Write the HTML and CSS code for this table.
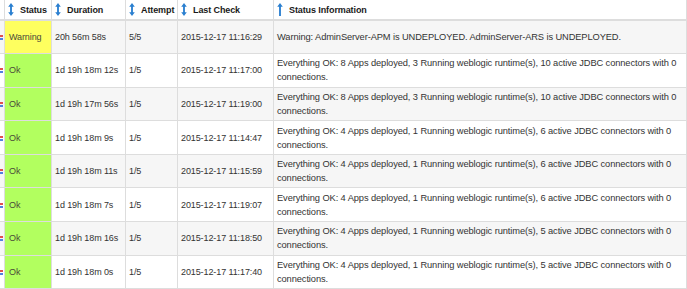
FILE: index.html
```html
<!DOCTYPE html>
<html>
<head>
<meta charset="utf-8">
<link rel="stylesheet" href="styles.css">
</head>
<body>
<table class="grid">
  <colgroup>
    <col class="c-lead"><col class="c-status"><col class="c-dur"><col class="c-att"><col class="c-last"><col class="c-info">
  </colgroup>
  <thead>
    <tr>
      <th class="lead"></th>
      <th><span class="hd"><svg class="sort" viewBox="0 0 6 14"><path d="M3 0 L6 4 H4 V10 H6 L3 14 L0 10 H2 V4 H0 Z"/></svg>Status</span></th>
      <th><span class="hd"><svg class="sort" viewBox="0 0 6 14"><path d="M3 0 L6 4 H4 V10 H6 L3 14 L0 10 H2 V4 H0 Z"/></svg>Duration</span></th>
      <th><span class="hd"><svg class="sort" viewBox="0 0 6 14"><path d="M3 0 L6 4 H4 V10 H6 L3 14 L0 10 H2 V4 H0 Z"/></svg>Attempt</span></th>
      <th><span class="hd"><svg class="sort" viewBox="0 0 6 14"><path d="M3 0 L6 4 H4 V10 H6 L3 14 L0 10 H2 V4 H0 Z"/></svg>Last Check</span></th>
      <th><span class="hd"><svg class="sort" viewBox="0 0 6 14"><path d="M3 0 L6 4 H4 V14 H2 V4 H0 Z"/></svg>Status Information</span></th>
    </tr>
  </thead>
  <tbody>
    <tr><td class="lead"><span class="mark"></span></td><td class="st warn">Warning</td><td>20h 56m 58s</td><td>5/5</td><td>2015-12-17 11:16:29</td><td class="info">Warning: AdminServer-APM is UNDEPLOYED. AdminServer-ARS is UNDEPLOYED.</td></tr>
    <tr><td class="lead"><span class="mark"></span></td><td class="st ok">Ok</td><td>1d 19h 18m 12s</td><td>1/5</td><td>2015-12-17 11:17:00</td><td class="info">Everything OK: 8 Apps deployed, 3 Running weblogic runtime(s), 10 active JDBC connectors with 0 connections.</td></tr>
    <tr><td class="lead"><span class="mark"></span></td><td class="st ok">Ok</td><td>1d 19h 17m 56s</td><td>1/5</td><td>2015-12-17 11:19:00</td><td class="info">Everything OK: 8 Apps deployed, 3 Running weblogic runtime(s), 10 active JDBC connectors with 0 connections.</td></tr>
    <tr><td class="lead"><span class="mark"></span></td><td class="st ok">Ok</td><td>1d 19h 18m 9s</td><td>1/5</td><td>2015-12-17 11:14:47</td><td class="info">Everything OK: 4 Apps deployed, 1 Running weblogic runtime(s), 6 active JDBC connectors with 0 connections.</td></tr>
    <tr><td class="lead"><span class="mark"></span></td><td class="st ok">Ok</td><td>1d 19h 18m 11s</td><td>1/5</td><td>2015-12-17 11:15:59</td><td class="info">Everything OK: 4 Apps deployed, 1 Running weblogic runtime(s), 6 active JDBC connectors with 0 connections.</td></tr>
    <tr><td class="lead"><span class="mark"></span></td><td class="st ok">Ok</td><td>1d 19h 18m 7s</td><td>1/5</td><td>2015-12-17 11:19:07</td><td class="info">Everything OK: 4 Apps deployed, 1 Running weblogic runtime(s), 6 active JDBC connectors with 0 connections.</td></tr>
    <tr><td class="lead"><span class="mark"></span></td><td class="st ok">Ok</td><td>1d 19h 18m 16s</td><td>1/5</td><td>2015-12-17 11:18:50</td><td class="info">Everything OK: 4 Apps deployed, 1 Running weblogic runtime(s), 5 active JDBC connectors with 0 connections.</td></tr>
    <tr><td class="lead"><span class="mark"></span></td><td class="st ok">Ok</td><td>1d 19h 18m 0s</td><td>1/5</td><td>2015-12-17 11:17:40</td><td class="info">Everything OK: 4 Apps deployed, 1 Running weblogic runtime(s), 5 active JDBC connectors with 0 connections.</td></tr>
  </tbody>
</table>
</body>
</html>
```

FILE: styles.css
```css
html, body {
  margin: 0;
  padding: 0;
  background: #ffffff;
}

.grid {
  border-collapse: collapse;
  table-layout: fixed;
  width: calc(100% + 17px);
  margin-left: -17px;
  font-family: "Liberation Sans", Arial, sans-serif;
  font-size: 9px;
  letter-spacing: -0.1px;
  line-height: 14px;
  color: #333333;
}

.c-lead { width: 21px; }
.c-status { width: 47px; }
.c-dur { width: 74px; }
.c-att { width: 52px; }
.c-last { width: 96px; }

.grid th {
  height: 19px;
  padding: 0 3px;
  text-align: left;
  font-weight: bold;
  color: #1a1a1a;
  background: #ffffff;
  border: 1px solid #dddddd;
  border-top: none;
  border-bottom: 2px solid #dddddd;
  white-space: nowrap;
}

.hd {
  display: flex;
  align-items: center;
  gap: 6px;
}

.sort {
  width: 6px;
  height: 13px;
  fill: #2a7fd0;
  flex: none;
}

.grid td {
  height: 33.6px;
  box-sizing: border-box;
  padding: 1px 3px;
  vertical-align: middle;
  border: 1px solid #dddddd;
  white-space: nowrap;
}

.grid td.info {
  white-space: normal;
  padding-right: 4px;
  font-size: 9.3px;
}

.grid tbody tr:nth-child(odd) td { background: #f6f6f6; }
.grid tbody tr:nth-child(even) td { background: #ffffff; }

.grid tbody tr td.st { padding-left: 4px; color: #4a4a3a; }
.grid tbody tr td.warn { background: #feff5f; }
.grid tbody tr td.ok { background: #b2ff5f; }

.grid td.lead {
  padding: 0;
  text-align: right;
}

.mark {
  display: inline-block;
  width: 3px;
  height: 5px;
  margin-top: 4px;
  border-top: 2px solid #e05050;
  border-bottom: 2px solid #5080e0;
  box-sizing: border-box;
  margin-right: 1px;
}
```
